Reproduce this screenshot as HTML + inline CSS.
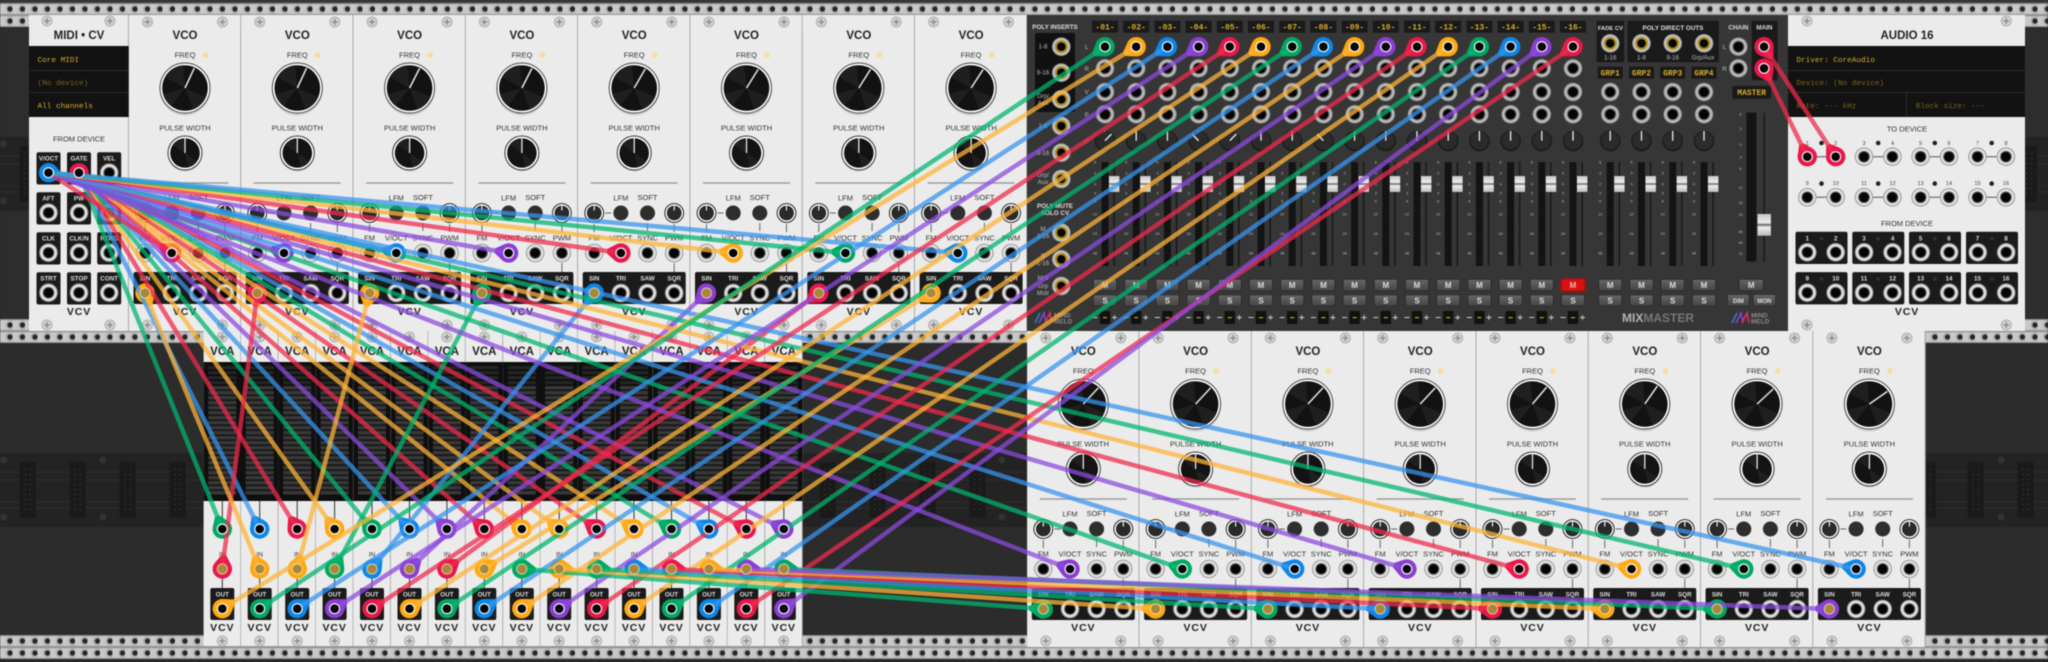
<!DOCTYPE html>
<html><head><meta charset="utf-8"><title>VCV Rack patch</title>
<style>
html,body{margin:0;padding:0;background:#222;width:2048px;height:662px;overflow:hidden}
svg{display:block;filter:blur(.4px)}
text{font-family:"Liberation Sans",sans-serif}
.t{font-weight:bold;font-size:11.5px;text-anchor:middle;fill:#222}
.l{font-size:7.5px;text-anchor:middle;fill:#333}
.w{font-weight:bold;font-size:6.3px;text-anchor:middle;fill:#ddd}
.v{font-weight:bold;font-size:10.5px;text-anchor:middle;fill:#222;letter-spacing:.9px}
.m{font-family:"Liberation Mono",monospace;font-size:7.7px;fill:#d8ac2a}
.d{font-family:"Liberation Mono",monospace;font-size:7.7px;fill:#7c6418}
.a{font-family:"Liberation Mono",monospace;font-size:8px;font-weight:bold;text-anchor:middle;fill:#d8ac2a}
.s{font-size:3.8px;text-anchor:middle;fill:#bbb}
.k{font-size:6.2px;text-anchor:middle;fill:#bbb}
.h{font-weight:bold;font-size:6.3px;text-anchor:middle;fill:#ddd}
.b{font-weight:bold;font-size:8px;text-anchor:middle;fill:#ddd}
.n{font-size:5.6px;text-anchor:middle;fill:#444}
.r{fill:#e8174a}.y{fill:#ffa80f}.g{fill:#00a862}.u{fill:#0d86e8}.p{fill:#8a3ed2}
#cab line{stroke-width:4.5;opacity:.74;fill:none}
.R{stroke:#f02a4b}.Y{stroke:#ffb437}.G{stroke:#00b56e}.B{stroke:#3695ef}.P{stroke:#8b4ade}
</style></head><body>
<svg xmlns="http://www.w3.org/2000/svg" width="2048" height="662" viewBox="0 0 2048 662">
<defs>
<pattern id="rail" width="12.5" height="12" patternUnits="userSpaceOnUse">
<rect width="12.5" height="12" fill="#c8c8c8"/><rect width="12.5" height="1.2" fill="#8e8e8e"/><rect y="10.8" width="12.5" height="1.2" fill="#9c9c9c"/>
<circle cx="10" cy="6" r="4.4" fill="#aaa"/><circle cx="10" cy="6" r="2.6" fill="#262626"/>
</pattern>
<pattern id="st" width="4" height="5" patternUnits="userSpaceOnUse"><rect width="4" height="5" fill="#151515"/><rect width="4" height="3.4" fill="#383838"/></pattern>
<pattern id="fs" width="7" height="2.4" patternUnits="userSpaceOnUse"><rect width="7" height="2.4" fill="#0c0c0c"/><rect y="1.6" width="7" height=".8" fill="#222"/></pattern>
<pattern id="cd" width="5" height="5" patternUnits="userSpaceOnUse"><rect width="5" height="5" fill="#1a1a1a"/><circle cx="2.5" cy="2.5" r=".7" fill="#3a3a3a"/></pattern>
<linearGradient id="hd" x1="0" y1="0" x2="0" y2="1"><stop offset="0" stop-color="#c8c8c8"/><stop offset=".4" stop-color="#eee"/><stop offset=".5" stop-color="#666"/><stop offset=".6" stop-color="#eee"/><stop offset="1" stop-color="#bbb"/></linearGradient>
<linearGradient id="bt" x1="0" y1="0" x2="0" y2="1"><stop offset="0" stop-color="#666"/><stop offset="1" stop-color="#444"/></linearGradient>
<g id="sc"><circle r="5" fill="#d2d2d2" stroke="#b0b0b0"/><path d="M-3 0H3M0-3V3" stroke="#888" stroke-width="1.3"/></g>
<g id="j"><circle r="9.3" fill="#a0a0a0"/><circle r="8.1" fill="#e8e8e8"/><circle r="6.1" fill="#7c7c7c"/><circle r="5" fill="#050505"/></g>
<g id="jm"><circle r="9.3" fill="#8c8c8c"/><circle r="8.2" fill="#bdbdbd"/><circle r="6.2" fill="#707070"/><circle r="5" fill="#050505"/></g>
<g id="jg"><circle r="9.3" fill="#a0a0a0"/><circle r="8.2" fill="#c4c4c4"/><circle r="6.4" fill="#b08c10"/><circle r="4.3" fill="#050505"/></g>
<g id="K"><ellipse cy="2.5" rx="25" ry="25" fill="#cfcfcf"/><circle r="25" fill="#fff" stroke="#444"/><circle r="22.8" fill="#121212"/>
<path d="M0 0L-20-11A23 23 0 0 1 -2-22.8ZM0 0L21 9A23 23 0 0 1 8 21.5ZM0 0L-14 18A23 23 0 0 1 -22 6Z" fill="#1f1f1f"/></g>
<g id="pk"><circle cy="1.5" r="17" fill="#d0d0d0"/><circle r="17" fill="#fff" stroke="#333"/><circle r="14.8" fill="#131313"/><path d="M0 0L-12-8A14.8 14.8 0 0 1 -2-14.6ZM0 0L12 8A14.8 14.8 0 0 1 3 14.5Z" fill="#1f1f1f"/><path d="M0 0V-16.5" stroke="#e8e8e8" stroke-width="1.3"/></g>
<g id="tr"><circle r="9.4" fill="#fff" stroke="#222"/><circle r="7.4" fill="#2a2a2a"/><path d="M0-2.5V-9" stroke="#eee" stroke-width="1.2"/></g>
<g id="vco">
<rect x="-56.2" width="112.4" height="316" fill="#ebebeb"/><rect x="55.3" width="1" height="316" fill="#9a9a9a"/>
<use href="#sc" x="-37.5" y="7"/><use href="#sc" x="37.5" y="7"/><use href="#sc" x="-37.5" y="310"/><use href="#sc" x="37.5" y="310"/>
<text class="t" y="24">VCO</text>
<text class="l" y="42.7">FREQ</text><circle cx="20.5" cy="40" r="2.8" fill="#f7dc9a"/>
<use href="#K" y="73"/>
<text class="l" y="115.7">PULSE WIDTH</text>
<use href="#pk" y="138"/>
<rect x="-43.5" y="167.3" width="87" height="1.4" fill="#999"/>
<text class="l" x="-13.3" y="185.5">LFM</text><text class="l" x="13.3" y="184.8">SOFT</text>
<use href="#tr" x="-40" y="198"/><use href="#tr" x="40" y="198"/>
<circle cx="-13.3" cy="198" r="7.5" fill="#2e2e2e"/><circle cx="13.3" cy="198" r="7.5" fill="#2e2e2e"/>
<path d="M-29 198H-23M-40 209V217M13.3 208V216M40 209V217M40 248V257" stroke="#666" stroke-width="1"/>
<text class="l" x="-40" y="225.6">FM</text><text class="l" x="-13.3" y="225.6">V/OCT</text><text class="l" x="13.3" y="225.6">SYNC</text><text class="l" x="40" y="225.6">PWM</text>
<use href="#j" x="-40" y="238"/><use href="#j" x="-13.3" y="238"/><use href="#j" x="13.3" y="238"/><use href="#j" x="40" y="238"/>
<rect x="-51.5" y="257" width="103" height="32" rx="2" fill="#1b1b1b"/>
<text class="w" x="-40" y="265.3">SIN</text><text class="w" x="-13.3" y="265.3">TRI</text><text class="w" x="13.3" y="265.3">SAW</text><text class="w" x="40" y="265.3">SQR</text>
<use href="#j" x="-40" y="278"/><use href="#j" x="-13.3" y="278"/><use href="#j" x="13.3" y="278"/><use href="#j" x="40" y="278"/>
<text class="v" y="300">VCV</text>
</g>
<g id="vca">
<rect x="-18.7" width="37.4" height="315" fill="#ebebeb"/><rect x="18" width=".9" height="315" fill="#a4a4a4"/>
<rect x="-18.7" y="31" width="37.4" height="139" fill="#0f0f0f"/><rect x="-14" y="35" width="28" height="129" fill="url(#st)"/><rect x="-14" y="35" width="28" height="20" fill="#000" opacity=".35"/>
<use href="#sc" y="6"/><use href="#sc" y="310"/>
<text class="t" y="24">VCA</text>
<path d="M0 170V192M0 247V257" stroke="#333" stroke-width="1"/>
<text class="l" y="225.5" style="font-size:6.5px">IN</text>
<rect x="-12" y="257" width="24" height="32" rx="2" fill="#1b1b1b"/>
<text class="w" y="265.3">OUT</text>
<text class="v" y="300">VCV</text>
</g>
<g id="fad">
<use href="#jm" y="92"/><use href="#jm" y="114.3"/>
<circle cy="141" r="10.3" fill="#1b1b1b"/><circle cy="140.5" r="9" fill="#2b2b2b"/><path d="M0 140.7V131" stroke="#eee" stroke-width="1.3"/>
<rect x="-3.5" y="162" width="7" height="104" fill="url(#fs)"/>
<rect x="8.3" y="162" width="1.6" height="104" fill="#1b1b1b"/>
<rect x="4" y="176" width="10.4" height="16" fill="url(#hd)"/>
<text class="s" x="-10" y="163.5">6</text><text class="s" x="-10" y="174.5">3</text><text class="s" x="-10" y="185.5">0</text><text class="s" x="-10" y="194.5">3</text><text class="s" x="-10" y="202.5">6</text><text class="s" x="-10" y="215.5">12</text><text class="s" x="-10" y="235">24</text><text class="s" x="-10" y="254.5">48</text>
<rect x="-11.5" y="279.3" width="23" height="11.6" rx="1.5" fill="url(#bt)" stroke="#222" stroke-width=".6"/><text class="b" y="288">M</text>
<rect x="-11.5" y="295" width="23" height="11" rx="1.5" fill="url(#bt)" stroke="#222" stroke-width=".6"/><text class="b" y="303.5">S</text>
</g>
<g id="trk"><use href="#jm" y="46.7"/><use href="#jm" y="68.3"/><use href="#fad"/>
<rect x="-5.2" y="311" width="10.4" height="13" rx="1" fill="#111"/><rect x="-2" y="317" width="4" height="1.2" fill="#c9a020"/>
<path d="M-12.5 317.5H-7.5M7 317.5H12M9.5 315V320" stroke="#ccc" stroke-width=".9"/></g>
<g id="bx"><rect x="-12" y="-20.5" width="24" height="32.3" rx="2" fill="#1b1b1b"/><use href="#j"/></g>
<g id="pr"><path d="M0 0H28.4" stroke="#555"/><use href="#j"/><use href="#j" x="28.4"/><circle cx="14.2" cy="-13.7" r="2.3" fill="#222"/></g>
<g id="pb2"><rect x="-26" y="-20.6" width="52" height="32.3" rx="2" fill="#1b1b1b"/><use href="#j" x="-14.2"/><use href="#j" x="14.2"/><circle cy="-13.7" r="1.8" fill="#333"/></g>
<g id="mm"><path d="M0 11L5 1" stroke="#3c78c8" stroke-width="1.6"/><path d="M4 11L9 1L11 11" stroke="#7a4ac8" stroke-width="1.6" fill="none"/><path d="M10 11L15 1L17 11" stroke="#e0305a" stroke-width="1.6" fill="none"/>
<text x="19" y="5.5" style="font-size:6.5px;font-weight:bold;fill:#8a8a8a">MIND</text><text x="19" y="11.5" style="font-size:6.5px;font-weight:bold;fill:#8a8a8a">MELD</text></g>
<g id="cn"><rect x="-8" width="16" height="56" fill="#1a1a1a"/><rect x="-4" y="5" width="8" height="46" fill="url(#cd)"/></g>
<g id="band"><rect width="2048" height="74" fill="#232323"/><path d="M0 19H2048M0 27H2048M0 49H2048M0 55H2048" stroke="#2d2d2d" stroke-width="1.2"/></g>
<path id="b" d="M14-2.2L14 2.2L5.5 8A9.7 9.7 0 1 1 5.5-8Z"/>
<g id="c"><circle r="5.6" fill="#fff" opacity=".85"/><circle r="4.3" fill="#050505"/></g>
<g id="o"><circle r="5.6" fill="#e8d8a8" opacity=".8"/><circle r="4.5" fill="#a8863a"/></g>
</defs>

<rect width="2048" height="662" fill="#2a2a2a"/>
<rect width="2048" height="3" fill="#3a3a3a"/>
<rect y="27" width="2048" height="292" fill="#2d2d2d"/><rect y="343" width="2048" height="292" fill="#2c2c2c"/>
<use href="#band" y="137"/><use href="#band" y="453"/>
<use href="#cn" x="27.7" y="146"/><use href="#cn" x="2029" y="146"/>
<use href="#cn" x="27.7" y="462"/><use href="#cn" x="77.7" y="462"/><use href="#cn" x="127.7" y="462"/><use href="#cn" x="177.7" y="462"/>
<use href="#cn" x="827.7" y="462"/><use href="#cn" x="877.5" y="462"/><use href="#cn" x="927.4" y="462"/><use href="#cn" x="977.3" y="462"/>
<use href="#cn" x="1928" y="462"/><use href="#cn" x="1975.7" y="462"/><use href="#cn" x="2025.5" y="462"/>
<circle cx="3.5" cy="144" r="3.5" fill="#333"/><circle cx="3.5" cy="201" r="3.5" fill="#333"/><circle cx="3.5" cy="460" r="3.5" fill="#333"/><circle cx="3.5" cy="517" r="3.5" fill="#333"/><circle cx="103" cy="460" r="3.5" fill="#333"/><circle cx="103" cy="517" r="3.5" fill="#333"/><circle cx="1002" cy="460" r="3.5" fill="#333"/><circle cx="1002" cy="517" r="3.5" fill="#333"/><circle cx="2001" cy="460" r="3.5" fill="#333"/><circle cx="2001" cy="517" r="3.5" fill="#333"/>
<rect transform="translate(0,3)" width="2048" height="12" fill="url(#rail)"/>
<rect transform="translate(0,15)" width="2048" height="12" fill="url(#rail)"/>
<rect transform="translate(0,319)" width="2048" height="12" fill="url(#rail)"/>
<rect transform="translate(0,331)" width="2048" height="12" fill="url(#rail)"/>
<rect transform="translate(0,635)" width="2048" height="12" fill="url(#rail)"/>
<rect transform="translate(0,647)" width="2048" height="12" fill="url(#rail)"/>

<!-- MIDI CV -->
<rect x="29" y="15" width="100" height="316" fill="#ebebeb"/><rect x="128" y="15" width="1" height="316" fill="#9a9a9a"/>
<use href="#sc" x="47" y="21"/><use href="#sc" x="110" y="21"/><use href="#sc" x="47" y="325"/><use href="#sc" x="110" y="325"/>
<text class="t" x="79" y="39">MIDI • CV</text>
<rect x="29" y="46" width="100" height="71" fill="#121212"/><path d="M29 70.5H129M29 92.5H129" stroke="#2b2b2b"/>
<text class="m" x="37.5" y="62">Core MIDI</text><text class="d" x="37.5" y="85">(No device)</text><text class="m" x="37.5" y="108">All channels</text>
<text class="l" x="79" y="141.7">FROM DEVICE</text>
<g>
<use href="#bx" x="48.5" y="172.7"/><use href="#bx" x="79" y="172.7"/><use href="#bx" x="109.2" y="172.7"/>
<use href="#bx" x="48.5" y="212.7"/><use href="#bx" x="79" y="212.7"/><use href="#bx" x="109.2" y="212.7"/>
<use href="#bx" x="48.5" y="252.7"/><use href="#bx" x="79" y="252.7"/><use href="#bx" x="109.2" y="252.7"/>
<use href="#bx" x="48.5" y="292.7"/><use href="#bx" x="79" y="292.7"/><use href="#bx" x="109.2" y="292.7"/>
</g>
<text class="h" x="48.5" y="160.3">V/OCT</text><text class="h" x="79" y="160.3">GATE</text><text class="h" x="109.2" y="160.3">VEL</text>
<text class="h" x="48.5" y="200.3">AFT</text><text class="h" x="79" y="200.3">PW</text><text class="h" x="109.2" y="200.3">MW</text>
<text class="h" x="48.5" y="240.3">CLK</text><text class="h" x="79" y="240.3">CLK/N</text><text class="h" x="109.2" y="240.3">RTRG</text>
<text class="h" x="48.5" y="280.3">STRT</text><text class="h" x="79" y="280.3">STOP</text><text class="h" x="109.2" y="280.3">CONT</text>
<text class="v" x="79" y="315">VCV</text>

<!-- VCO rows -->
<use href="#vco" x="185" y="15"/><use href="#vco" x="297.3" y="15"/><use href="#vco" x="409.6" y="15"/><use href="#vco" x="521.9" y="15"/><use href="#vco" x="634.2" y="15"/><use href="#vco" x="746.5" y="15"/><use href="#vco" x="858.8" y="15"/><use href="#vco" x="971.1" y="15"/>
<use href="#vco" x="1083.3" y="331"/><use href="#vco" x="1195.6" y="331"/><use href="#vco" x="1307.9" y="331"/><use href="#vco" x="1420.2" y="331"/><use href="#vco" x="1532.5" y="331"/><use href="#vco" x="1644.8" y="331"/><use href="#vco" x="1757.1" y="331"/><use href="#vco" x="1869.4" y="331"/>
<g stroke="#e8e8e8" stroke-width="1.5">
<path d="M0 0V-22" transform="translate(185 88) rotate(25)"/><path d="M0 0V-22" transform="translate(297.3 88) rotate(25)"/><path d="M0 0V-22" transform="translate(409.6 88) rotate(27)"/><path d="M0 0V-22" transform="translate(521.9 88) rotate(27)"/><path d="M0 0V-22" transform="translate(634.2 88) rotate(30)"/><path d="M0 0V-22" transform="translate(746.5 88) rotate(32)"/><path d="M0 0V-22" transform="translate(858.8 88) rotate(32)"/><path d="M0 0V-22" transform="translate(971.1 88) rotate(33)"/>
<path d="M0 0V-22" transform="translate(1083.3 404) rotate(43)"/><path d="M0 0V-22" transform="translate(1195.6 404) rotate(43)"/><path d="M0 0V-22" transform="translate(1307.9 404) rotate(43)"/><path d="M0 0V-22" transform="translate(1420.2 404) rotate(43)"/><path d="M0 0V-22" transform="translate(1532.5 404) rotate(40)"/><path d="M0 0V-22" transform="translate(1644.8 404) rotate(35)"/><path d="M0 0V-22" transform="translate(1757.1 404) rotate(47)"/><path d="M0 0V-22" transform="translate(1869.4 404) rotate(55)"/>
</g>

<!-- VCA row -->
<use href="#vca" x="222.3" y="331"/><use href="#vca" x="259.7" y="331"/><use href="#vca" x="297.2" y="331"/><use href="#vca" x="334.6" y="331"/><use href="#vca" x="372" y="331"/><use href="#vca" x="409.5" y="331"/><use href="#vca" x="446.9" y="331"/><use href="#vca" x="484.3" y="331"/><use href="#vca" x="521.8" y="331"/><use href="#vca" x="559.2" y="331"/><use href="#vca" x="596.6" y="331"/><use href="#vca" x="634" y="331"/><use href="#vca" x="671.5" y="331"/><use href="#vca" x="708.9" y="331"/><use href="#vca" x="746.3" y="331"/><use href="#vca" x="783.8" y="331"/>

<!-- MixMaster -->
<rect x="1027" y="15" width="761" height="316" fill="#363636"/>
<text class="h" x="1055" y="29">POLY INSERTS</text>
<rect x="1035" y="33" width="40" height="79" rx="2" fill="#111"/>
<use href="#jg" x="1061.3" y="46.7"/><use href="#jg" x="1061.3" y="72.7"/><use href="#jg" x="1061.3" y="99.3"/><use href="#jg" x="1061.3" y="126"/><use href="#jg" x="1061.3" y="152.7"/><use href="#jg" x="1061.3" y="179"/><use href="#jg" x="1061.3" y="232.7"/><use href="#jg" x="1061.3" y="259.3"/><use href="#jg" x="1061.3" y="286"/>
<text class="k" x="1043" y="48.5">1-8</text><text class="k" x="1043" y="74.5">9-16</text><text class="k" x="1043" y="98">Grp/</text><text class="k" x="1043" y="105">Aux</text><text class="k" x="1043" y="128">1-8</text><text class="k" x="1043" y="155">9-16</text><text class="k" x="1043" y="177">Grp/</text><text class="k" x="1043" y="184">Aux</text>
<text class="h" x="1055" y="208">POLY MUTE</text><text class="h" x="1055" y="215">SOLO CV</text>
<text class="k" x="1043" y="231">M</text><text class="k" x="1043" y="238">1-16</text><text class="k" x="1043" y="258">S</text><text class="k" x="1043" y="265">1-16</text><text class="k" x="1043" y="280">M/S</text><text class="k" x="1043" y="288">Grp</text><text class="k" x="1043" y="295">Mstr</text>
<text class="k" x="1086.7" y="49">L</text><text class="k" x="1086.7" y="71">R</text><text class="k" x="1086.7" y="94">V</text><text class="k" x="1086.7" y="117">P</text><text class="k" x="1086.7" y="144">P</text>
<use href="#mm" x="1035" y="312"/>

<g><use href="#trk" x="1105"/><use href="#trk" x="1136.2"/><use href="#trk" x="1167.4"/><use href="#trk" x="1198.6"/><use href="#trk" x="1229.8"/><use href="#trk" x="1261"/><use href="#trk" x="1292.2"/><use href="#trk" x="1323.4"/><use href="#trk" x="1354.6"/><use href="#trk" x="1385.8"/><use href="#trk" x="1417"/><use href="#trk" x="1448.2"/><use href="#trk" x="1479.4"/><use href="#trk" x="1510.6"/><use href="#trk" x="1541.8"/><use href="#trk" x="1573"/></g>
<g fill="#1a1a1a">
<rect x="1092" y="20.7" width="26" height="12"/><rect x="1123.2" y="20.7" width="26" height="12"/><rect x="1154.4" y="20.7" width="26" height="12"/><rect x="1185.6" y="20.7" width="26" height="12"/><rect x="1216.8" y="20.7" width="26" height="12"/><rect x="1248" y="20.7" width="26" height="12"/><rect x="1279.2" y="20.7" width="26" height="12"/><rect x="1310.4" y="20.7" width="26" height="12"/><rect x="1341.6" y="20.7" width="26" height="12"/><rect x="1372.8" y="20.7" width="26" height="12"/><rect x="1404" y="20.7" width="26" height="12"/><rect x="1435.2" y="20.7" width="26" height="12"/><rect x="1466.4" y="20.7" width="26" height="12"/><rect x="1497.6" y="20.7" width="26" height="12"/><rect x="1528.8" y="20.7" width="26" height="12"/><rect x="1560" y="20.7" width="26" height="12"/>
</g>
<text class="a" x="1105" y="29.6">-01-</text><text class="a" x="1136.2" y="29.6">-02-</text><text class="a" x="1167.4" y="29.6">-03-</text><text class="a" x="1198.6" y="29.6">-04-</text><text class="a" x="1229.8" y="29.6">-05-</text><text class="a" x="1261" y="29.6">-06-</text><text class="a" x="1292.2" y="29.6">-07-</text><text class="a" x="1323.4" y="29.6">-08-</text><text class="a" x="1354.6" y="29.6">-09-</text><text class="a" x="1385.8" y="29.6">-10-</text><text class="a" x="1417" y="29.6">-11-</text><text class="a" x="1448.2" y="29.6">-12-</text><text class="a" x="1479.4" y="29.6">-13-</text><text class="a" x="1510.6" y="29.6">-14-</text><text class="a" x="1541.8" y="29.6">-15-</text><text class="a" x="1573" y="29.6">-16-</text>
<!-- pan overrides -->
<g><circle cx="1105" cy="140.5" r="9" fill="#2b2b2b"/><path d="M1105 140.7L1111.5 134" stroke="#eee" stroke-width="1.4"/><circle cx="1198.6" cy="140.5" r="9" fill="#2b2b2b"/><path d="M1198.6 140.7L1192 134" stroke="#eee" stroke-width="1.4"/><circle cx="1229.8" cy="140.5" r="9" fill="#2b2b2b"/><path d="M1229.8 140.7L1236.3 134" stroke="#eee" stroke-width="1.4"/><circle cx="1323.4" cy="140.5" r="9" fill="#2b2b2b"/><path d="M1323.4 140.7L1317 134" stroke="#eee" stroke-width="1.4"/></g>
<!-- red mute -->
<rect x="1559" y="277" width="28" height="16" rx="3" fill="#a01010" opacity=".5"/><rect x="1561.5" y="279.3" width="23" height="11.6" rx="1.5" fill="#d81010"/><text class="b" x="1573" y="288" style="fill:#ffb0b0">M</text>

<!-- groups -->
<rect x="1596.6" y="20.7" width="27.6" height="41.6" rx="1" fill="#1a1a1a"/><rect x="1627.5" y="20.7" width="91.3" height="41.6" rx="1" fill="#1a1a1a"/>
<text class="h" x="1610.4" y="30" style="font-size:5.8px">FADE CV</text><text class="h" x="1673" y="30">POLY DIRECT OUTS</text>
<use href="#jg" x="1610.2" y="43.3"/><use href="#jg" x="1641.5" y="43.3"/><use href="#jg" x="1672.7" y="43.3"/><use href="#jg" x="1704" y="43.3"/>
<text class="k" x="1610.2" y="59.5">1-16</text><text class="k" x="1641.5" y="59.5">1-8</text><text class="k" x="1672.7" y="59.5">9-16</text><text class="k" x="1703" y="59.5">Grp/Aux</text>
<g fill="#1a1a1a"><rect x="1597.7" y="66.7" width="25" height="12"/><rect x="1629" y="66.7" width="25" height="12"/><rect x="1660.2" y="66.7" width="25" height="12"/><rect x="1691.5" y="66.7" width="25" height="12"/></g>
<text class="a" x="1610.2" y="75.6">GRP1</text><text class="a" x="1641.5" y="75.6">GRP2</text><text class="a" x="1672.7" y="75.6">GRP3</text><text class="a" x="1704" y="75.6">GRP4</text>
<use href="#fad" x="1610.2"/><use href="#fad" x="1641.5"/><use href="#fad" x="1672.7"/><use href="#fad" x="1704"/>

<!-- master -->
<rect x="1751.6" y="20.7" width="26" height="59.5" rx="1" fill="#1a1a1a"/>
<text class="h" x="1738.4" y="29.5">CHAIN</text><text class="h" x="1764.4" y="29.5">MAIN</text>
<use href="#jm" x="1738.4" y="46.7"/><use href="#jm" x="1738.4" y="68.3"/>
<text class="k" x="1724.5" y="49">L</text><text class="k" x="1724.5" y="71">R</text>
<rect x="1732.4" y="85.7" width="38.6" height="13" rx="1" fill="#1a1a1a"/><text class="a" x="1751.7" y="95">MASTER</text>
<rect x="1746.4" y="112.7" width="10" height="149" fill="url(#fs)"/><rect x="1763.4" y="112.7" width="1.6" height="149" fill="#1b1b1b"/>
<rect x="1757.5" y="214" width="13.4" height="21.7" fill="url(#hd)"/>
<g><text class="s" x="1740.5" y="115.5">6</text><text class="s" x="1740.5" y="130">3</text><text class="s" x="1740.5" y="146">0</text><text class="s" x="1740.5" y="158.5">3</text><text class="s" x="1740.5" y="170">6</text><text class="s" x="1740.5" y="189">12</text><text class="s" x="1740.5" y="204">18</text><text class="s" x="1740.5" y="216">24</text><text class="s" x="1740.5" y="233">36</text><text class="s" x="1740.5" y="244">48</text><text class="s" x="1740.5" y="255">72</text></g>
<rect x="1739.2" y="279.3" width="24" height="11.6" rx="1.5" fill="url(#bt)" stroke="#222" stroke-width=".6"/><text class="b" x="1751.2" y="288">M</text>
<rect x="1727.6" y="294.5" width="21.6" height="11.5" rx="1.5" fill="url(#bt)" stroke="#222" stroke-width=".6"/><text class="b" x="1738.4" y="303" style="font-size:6px">DIM</text>
<rect x="1753.2" y="294.5" width="22.4" height="11.5" rx="1.5" fill="url(#bt)" stroke="#222" stroke-width=".6"/><text class="b" x="1764.4" y="303" style="font-size:6px">MON</text>
<text x="1622" y="322" style="font-size:12px;font-weight:bold"><tspan fill="#b4b4b4">MIX</tspan><tspan fill="#777">MASTER</tspan></text>
<use href="#mm" x="1732" y="312"/>

<!-- Audio 16 -->
<rect x="1788" y="15" width="237" height="316" fill="#ebebeb"/>
<use href="#sc" x="1807" y="21"/><use href="#sc" x="2006.3" y="21"/><use href="#sc" x="1807" y="325"/><use href="#sc" x="2006.3" y="325"/>
<text class="t" x="1907" y="39">AUDIO 16</text>
<rect x="1788" y="46" width="237" height="71" fill="#121212"/><path d="M1788 70.5H2025M1788 92.5H2025M1906.5 93V117" stroke="#2b2b2b"/>
<text class="m" x="1796.4" y="62">Driver: CoreAudio</text><text class="d" x="1796.4" y="85">Device: (No device)</text><text class="d" x="1796.4" y="108">Rate: --- kHz</text><text class="d" x="1915.8" y="108">Block size: ---</text>
<text class="l" x="1907" y="131.3">TO DEVICE</text>
<use href="#pr" x="1807.3" y="156.7"/><use href="#pr" x="1864" y="156.7"/><use href="#pr" x="1920.6" y="156.7"/><use href="#pr" x="1977.5" y="156.7"/>
<use href="#pr" x="1807.3" y="197.3"/><use href="#pr" x="1864" y="197.3"/><use href="#pr" x="1920.6" y="197.3"/><use href="#pr" x="1977.5" y="197.3"/>
<text class="n" x="1807.3" y="145">1</text><text class="n" x="1835.7" y="145">2</text><text class="n" x="1864" y="145">3</text><text class="n" x="1892.6" y="145">4</text><text class="n" x="1920.6" y="145">5</text><text class="n" x="1949" y="145">6</text><text class="n" x="1977.5" y="145">7</text><text class="n" x="2006" y="145">8</text>
<text class="n" x="1807.3" y="185">9</text><text class="n" x="1835.7" y="185">10</text><text class="n" x="1864" y="185">11</text><text class="n" x="1892.6" y="185">12</text><text class="n" x="1920.6" y="185">13</text><text class="n" x="1949" y="185">14</text><text class="n" x="1977.5" y="185">15</text><text class="n" x="2006" y="185">16</text>
<text class="l" x="1907" y="226">FROM DEVICE</text>
<use href="#pb2" x="1821.5" y="252.3"/><use href="#pb2" x="1878.3" y="252.3"/><use href="#pb2" x="1935" y="252.3"/><use href="#pb2" x="1992" y="252.3"/>
<use href="#pb2" x="1821.5" y="292.7"/><use href="#pb2" x="1878.3" y="292.7"/><use href="#pb2" x="1935" y="292.7"/><use href="#pb2" x="1992" y="292.7"/>
<g style="fill:#ddd"><text class="h" x="1807.3" y="240.3">1</text><text class="h" x="1835.7" y="240.3">2</text><text class="h" x="1864" y="240.3">3</text><text class="h" x="1892.6" y="240.3">4</text><text class="h" x="1920.6" y="240.3">5</text><text class="h" x="1949" y="240.3">6</text><text class="h" x="1977.5" y="240.3">7</text><text class="h" x="2006" y="240.3">8</text>
<text class="h" x="1807.3" y="280.3">9</text><text class="h" x="1835.7" y="280.3">10</text><text class="h" x="1864" y="280.3">11</text><text class="h" x="1892.6" y="280.3">12</text><text class="h" x="1920.6" y="280.3">13</text><text class="h" x="1949" y="280.3">14</text><text class="h" x="1977.5" y="280.3">15</text><text class="h" x="2006" y="280.3">16</text></g>
<text class="v" x="1907" y="315">VCV</text>

<!-- plug bodies -->
<g>
<use href="#b" class="u" transform="translate(48.5 172.7) rotate(15)"/><use href="#b" class="r" transform="translate(79 172.7) rotate(60)"/>
<use href="#b" class="r" transform="translate(171.7 253) rotate(-147)"/><use href="#b" class="p" transform="translate(284 253) rotate(-161)"/><use href="#b" class="u" transform="translate(396.3 253) rotate(-167)"/><use href="#b" class="p" transform="translate(508.6 253) rotate(-170)"/><use href="#b" class="r" transform="translate(620.9 253) rotate(-172)"/><use href="#b" class="y" transform="translate(733.2 253) rotate(-173)"/><use href="#b" class="g" transform="translate(845.5 253) rotate(-174)"/><use href="#b" class="u" transform="translate(957.8 253) rotate(-175)"/>
<use href="#b" class="p" transform="translate(1070 569) rotate(-159)"/><use href="#b" class="g" transform="translate(1182.3 569) rotate(-161)"/><use href="#b" class="u" transform="translate(1294.7 569) rotate(-162)"/><use href="#b" class="p" transform="translate(1406.9 569) rotate(-164)"/><use href="#b" class="r" transform="translate(1519.2 569) rotate(-165)"/><use href="#b" class="y" transform="translate(1631.5 569) rotate(-166)"/><use href="#b" class="g" transform="translate(1743.8 569) rotate(-167)"/><use href="#b" class="u" transform="translate(1856.1 569) rotate(-168)"/>
<use href="#b" class="g" transform="translate(222.3 529) rotate(-112)"/><use href="#b" class="u" transform="translate(259.7 529) rotate(-117)"/><use href="#b" class="r" transform="translate(297.2 529) rotate(-121)"/><use href="#b" class="y" transform="translate(334.6 529) rotate(-126)"/><use href="#b" class="g" transform="translate(372 529) rotate(-129)"/><use href="#b" class="u" transform="translate(409.5 529) rotate(-133)"/><use href="#b" class="p" transform="translate(446.9 529) rotate(-136)"/><use href="#b" class="r" transform="translate(484.3 529) rotate(-139)"/><use href="#b" class="y" transform="translate(521.8 529) rotate(-141)"/><use href="#b" class="y" transform="translate(559.2 529) rotate(-143)"/><use href="#b" class="r" transform="translate(596.6 529) rotate(-145)"/><use href="#b" class="y" transform="translate(634 529) rotate(-147)"/><use href="#b" class="g" transform="translate(671.5 529) rotate(-149)"/><use href="#b" class="u" transform="translate(708.9 529) rotate(-150)"/><use href="#b" class="r" transform="translate(746.3 529) rotate(-152)"/><use href="#b" class="p" transform="translate(783.8 529) rotate(-153)"/>
<use href="#b" class="r" transform="translate(222.3 569) rotate(-83)"/><use href="#b" class="y" transform="translate(259.7 569) rotate(-113)"/><use href="#b" class="y" transform="translate(297.2 569) rotate(-75)"/><use href="#b" class="g" transform="translate(334.6 569) rotate(-62)"/><use href="#b" class="u" transform="translate(372 569) rotate(-51)"/><use href="#b" class="p" transform="translate(409.5 569) rotate(-43)"/><use href="#b" class="r" transform="translate(446.9 569) rotate(-37)"/><use href="#b" class="y" transform="translate(484.3 569) rotate(-32)"/><use href="#b" class="g" transform="translate(521.8 569) rotate(4)"/><use href="#b" class="y" transform="translate(559.2 569) rotate(4)"/><use href="#b" class="g" transform="translate(596.6 569) rotate(3)"/><use href="#b" class="u" transform="translate(634 569) rotate(3)"/><use href="#b" class="r" transform="translate(671.5 569) rotate(3)"/><use href="#b" class="y" transform="translate(708.9 569) rotate(3)"/><use href="#b" class="p" transform="translate(746.3 569) rotate(2)"/><use href="#b" class="g" transform="translate(783.8 569) rotate(2)"/>
<use href="#b" class="y" transform="translate(222.3 608.7) rotate(-32)"/><use href="#b" class="g" transform="translate(259.7 608.7) rotate(-34)"/><use href="#b" class="u" transform="translate(297.2 608.7) rotate(-33)"/><use href="#b" class="p" transform="translate(334.6 608.7) rotate(-33)"/><use href="#b" class="r" transform="translate(372 608.7) rotate(-33)"/><use href="#b" class="y" transform="translate(409.5 608.7) rotate(-33)"/><use href="#b" class="g" transform="translate(446.9 608.7) rotate(-34)"/><use href="#b" class="u" transform="translate(484.3 608.7) rotate(-34)"/><use href="#b" class="y" transform="translate(521.8 608.7) rotate(-34)"/><use href="#b" class="p" transform="translate(559.2 608.7) rotate(-34)"/><use href="#b" class="r" transform="translate(596.6 608.7) rotate(-34)"/><use href="#b" class="y" transform="translate(634 608.7) rotate(-35)"/><use href="#b" class="g" transform="translate(671.5 608.7) rotate(-35)"/><use href="#b" class="u" transform="translate(708.9 608.7) rotate(-35)"/><use href="#b" class="r" transform="translate(746.3 608.7) rotate(-34)"/><use href="#b" class="p" transform="translate(783.8 608.7) rotate(-37)"/>
<use href="#b" class="y" transform="translate(145 293) rotate(67)"/><use href="#b" class="r" transform="translate(257.3 293) rotate(97)"/><use href="#b" class="y" transform="translate(369.6 293) rotate(105)"/><use href="#b" class="g" transform="translate(481.9 293) rotate(118)"/><use href="#b" class="u" transform="translate(594.2 293) rotate(129)"/><use href="#b" class="p" transform="translate(706.5 293) rotate(137)"/><use href="#b" class="r" transform="translate(818.8 293) rotate(143)"/><use href="#b" class="y" transform="translate(931.1 293) rotate(148)"/>
<use href="#b" class="g" transform="translate(1043.3 609) rotate(184)"/><use href="#b" class="y" transform="translate(1155.6 609) rotate(184)"/><use href="#b" class="g" transform="translate(1267.9 609) rotate(183)"/><use href="#b" class="u" transform="translate(1380.2 609) rotate(183)"/><use href="#b" class="r" transform="translate(1492.5 609) rotate(183)"/><use href="#b" class="y" transform="translate(1604.8 609) rotate(183)"/><use href="#b" class="g" transform="translate(1717.1 609) rotate(182)"/><use href="#b" class="p" transform="translate(1829.4 609) rotate(182)"/>
<use href="#b" class="g" transform="translate(1105 46.7) rotate(146)"/><use href="#b" class="y" transform="translate(1136.2 46.7) rotate(148)"/><use href="#b" class="u" transform="translate(1167.4 46.7) rotate(147)"/><use href="#b" class="p" transform="translate(1198.6 46.7) rotate(147)"/><use href="#b" class="r" transform="translate(1229.8 46.7) rotate(147)"/><use href="#b" class="y" transform="translate(1261 46.7) rotate(147)"/><use href="#b" class="g" transform="translate(1292.2 46.7) rotate(146)"/><use href="#b" class="u" transform="translate(1323.4 46.7) rotate(146)"/><use href="#b" class="y" transform="translate(1354.6 46.7) rotate(146)"/><use href="#b" class="p" transform="translate(1385.8 46.7) rotate(146)"/><use href="#b" class="r" transform="translate(1417 46.7) rotate(146)"/><use href="#b" class="y" transform="translate(1448.2 46.7) rotate(145)"/><use href="#b" class="g" transform="translate(1479.4 46.7) rotate(145)"/><use href="#b" class="u" transform="translate(1510.6 46.7) rotate(145)"/><use href="#b" class="p" transform="translate(1541.8 46.7) rotate(143)"/><use href="#b" class="r" transform="translate(1573 46.7) rotate(146)"/>
<use href="#b" class="r" transform="translate(1764 46.7) rotate(57)"/><use href="#b" class="r" transform="translate(1764 68.3) rotate(64)"/><use href="#b" class="r" transform="translate(1835.7 156.7) rotate(-123)"/><use href="#b" class="r" transform="translate(1807.3 156.7) rotate(-116)"/>
</g>

<!-- cables -->
<g id="cab">
<line class="G" x1="79" y1="172.7" x2="222.3" y2="529"/><line class="B" x1="79" y1="172.7" x2="259.7" y2="529"/><line class="R" x1="79" y1="172.7" x2="297.2" y2="529"/><line class="Y" x1="79" y1="172.7" x2="334.6" y2="529"/><line class="G" x1="79" y1="172.7" x2="372" y2="529"/><line class="B" x1="79" y1="172.7" x2="409.5" y2="529"/><line class="P" x1="79" y1="172.7" x2="446.9" y2="529"/><line class="R" x1="79" y1="172.7" x2="484.3" y2="529"/><line class="Y" x1="79" y1="172.7" x2="521.8" y2="529"/><line class="Y" x1="79" y1="172.7" x2="559.2" y2="529"/><line class="R" x1="79" y1="172.7" x2="596.6" y2="529"/><line class="Y" x1="79" y1="172.7" x2="634" y2="529"/><line class="G" x1="79" y1="172.7" x2="671.5" y2="529"/><line class="B" x1="79" y1="172.7" x2="708.9" y2="529"/><line class="R" x1="79" y1="172.7" x2="746.3" y2="529"/><line class="P" x1="79" y1="172.7" x2="783.8" y2="529"/>
<line class="R" x1="222.3" y1="569" x2="257.3" y2="293"/><line class="Y" x1="259.7" y1="569" x2="145" y2="293"/><line class="Y" x1="297.2" y1="569" x2="369.6" y2="293"/><line class="G" x1="334.6" y1="569" x2="481.9" y2="293"/><line class="B" x1="372" y1="569" x2="594.2" y2="293"/><line class="P" x1="409.5" y1="569" x2="706.5" y2="293"/><line class="R" x1="446.9" y1="569" x2="818.8" y2="293"/><line class="Y" x1="484.3" y1="569" x2="931.1" y2="293"/>
<line class="B" x1="48.5" y1="172.7" x2="1856.1" y2="569"/><line class="G" x1="48.5" y1="172.7" x2="1743.8" y2="569"/><line class="Y" x1="48.5" y1="172.7" x2="1631.5" y2="569"/><line class="R" x1="48.5" y1="172.7" x2="1519.2" y2="569"/><line class="P" x1="48.5" y1="172.7" x2="1406.9" y2="569"/><line class="B" x1="48.5" y1="172.7" x2="1294.7" y2="569"/><line class="G" x1="48.5" y1="172.7" x2="1182.3" y2="569"/><line class="P" x1="48.5" y1="172.7" x2="1070" y2="569"/>
<line class="R" x1="48.5" y1="172.7" x2="171.7" y2="253"/><line class="P" x1="48.5" y1="172.7" x2="284" y2="253"/><line class="B" x1="48.5" y1="172.7" x2="396.3" y2="253"/><line class="P" x1="48.5" y1="172.7" x2="508.6" y2="253"/><line class="R" x1="48.5" y1="172.7" x2="620.9" y2="253"/><line class="Y" x1="48.5" y1="172.7" x2="733.2" y2="253"/><line class="G" x1="48.5" y1="172.7" x2="845.5" y2="253"/><line class="B" x1="48.5" y1="172.7" x2="957.8" y2="253"/>
<line class="Y" x1="222.3" y1="608.7" x2="1136.2" y2="46.7"/><line class="G" x1="259.7" y1="608.7" x2="1105" y2="46.7"/><line class="B" x1="297.2" y1="608.7" x2="1167.4" y2="46.7"/><line class="P" x1="334.6" y1="608.7" x2="1198.6" y2="46.7"/><line class="R" x1="372" y1="608.7" x2="1229.8" y2="46.7"/><line class="Y" x1="409.5" y1="608.7" x2="1261" y2="46.7"/><line class="G" x1="446.9" y1="608.7" x2="1292.2" y2="46.7"/><line class="B" x1="484.3" y1="608.7" x2="1323.4" y2="46.7"/><line class="Y" x1="521.8" y1="608.7" x2="1354.6" y2="46.7"/><line class="P" x1="559.2" y1="608.7" x2="1385.8" y2="46.7"/><line class="R" x1="596.6" y1="608.7" x2="1417" y2="46.7"/><line class="Y" x1="634" y1="608.7" x2="1448.2" y2="46.7"/><line class="G" x1="671.5" y1="608.7" x2="1479.4" y2="46.7"/><line class="B" x1="708.9" y1="608.7" x2="1510.6" y2="46.7"/><line class="R" x1="746.3" y1="608.7" x2="1573" y2="46.7"/><line class="P" x1="783.8" y1="608.7" x2="1541.8" y2="46.7"/>
<line class="G" x1="521.8" y1="569" x2="1043.3" y2="609"/><line class="Y" x1="559.2" y1="569" x2="1155.6" y2="609"/><line class="G" x1="596.6" y1="569" x2="1267.9" y2="609"/><line class="B" x1="634" y1="569" x2="1380.2" y2="609"/><line class="R" x1="671.5" y1="569" x2="1492.5" y2="609"/><line class="Y" x1="708.9" y1="569" x2="1604.8" y2="609"/><line class="G" x1="783.8" y1="569" x2="1717.1" y2="609"/><line class="P" x1="746.3" y1="569" x2="1829.4" y2="609"/>
<line class="R" x1="1764" y1="46.7" x2="1835.7" y2="156.7"/><line class="R" x1="1764" y1="68.3" x2="1807.3" y2="156.7"/>
</g>

<!-- plug centres -->
<g>
<use href="#c" x="48.5" y="172.7"/><use href="#c" x="79" y="172.7"/>
<use href="#c" x="171.7" y="253"/><use href="#c" x="284" y="253"/><use href="#c" x="396.3" y="253"/><use href="#c" x="508.6" y="253"/><use href="#c" x="620.9" y="253"/><use href="#c" x="733.2" y="253"/><use href="#c" x="845.5" y="253"/><use href="#c" x="957.8" y="253"/>
<use href="#c" x="1070" y="569"/><use href="#c" x="1182.3" y="569"/><use href="#c" x="1294.7" y="569"/><use href="#c" x="1406.9" y="569"/><use href="#c" x="1519.2" y="569"/><use href="#c" x="1631.5" y="569"/><use href="#c" x="1743.8" y="569"/><use href="#c" x="1856.1" y="569"/>
<use href="#c" x="222.3" y="529"/><use href="#c" x="259.7" y="529"/><use href="#c" x="297.2" y="529"/><use href="#c" x="334.6" y="529"/><use href="#c" x="372" y="529"/><use href="#c" x="409.5" y="529"/><use href="#c" x="446.9" y="529"/><use href="#c" x="484.3" y="529"/><use href="#c" x="521.8" y="529"/><use href="#c" x="559.2" y="529"/><use href="#c" x="596.6" y="529"/><use href="#c" x="634" y="529"/><use href="#c" x="671.5" y="529"/><use href="#c" x="708.9" y="529"/><use href="#c" x="746.3" y="529"/><use href="#c" x="783.8" y="529"/>
<use href="#o" x="222.3" y="569"/><use href="#o" x="259.7" y="569"/><use href="#o" x="297.2" y="569"/><use href="#o" x="334.6" y="569"/><use href="#o" x="372" y="569"/><use href="#o" x="409.5" y="569"/><use href="#o" x="446.9" y="569"/><use href="#o" x="484.3" y="569"/><use href="#o" x="521.8" y="569"/><use href="#o" x="559.2" y="569"/><use href="#o" x="596.6" y="569"/><use href="#o" x="634" y="569"/><use href="#o" x="671.5" y="569"/><use href="#o" x="708.9" y="569"/><use href="#o" x="746.3" y="569"/><use href="#o" x="783.8" y="569"/>
<use href="#c" x="222.3" y="608.7"/><use href="#c" x="259.7" y="608.7"/><use href="#c" x="297.2" y="608.7"/><use href="#c" x="334.6" y="608.7"/><use href="#c" x="372" y="608.7"/><use href="#c" x="409.5" y="608.7"/><use href="#c" x="446.9" y="608.7"/><use href="#c" x="484.3" y="608.7"/><use href="#c" x="521.8" y="608.7"/><use href="#c" x="559.2" y="608.7"/><use href="#c" x="596.6" y="608.7"/><use href="#c" x="634" y="608.7"/><use href="#c" x="671.5" y="608.7"/><use href="#c" x="708.9" y="608.7"/><use href="#c" x="746.3" y="608.7"/><use href="#c" x="783.8" y="608.7"/>
<use href="#o" x="145" y="293"/><use href="#o" x="257.3" y="293"/><use href="#o" x="369.6" y="293"/><use href="#o" x="481.9" y="293"/><use href="#o" x="594.2" y="293"/><use href="#o" x="706.5" y="293"/><use href="#o" x="818.8" y="293"/><use href="#o" x="931.1" y="293"/>
<use href="#o" x="1043.3" y="609"/><use href="#o" x="1155.6" y="609"/><use href="#o" x="1267.9" y="609"/><use href="#o" x="1380.2" y="609"/><use href="#o" x="1492.5" y="609"/><use href="#o" x="1604.8" y="609"/><use href="#o" x="1717.1" y="609"/><use href="#o" x="1829.4" y="609"/>
<use href="#c" x="1105" y="46.7"/><use href="#c" x="1136.2" y="46.7"/><use href="#c" x="1167.4" y="46.7"/><use href="#c" x="1198.6" y="46.7"/><use href="#c" x="1229.8" y="46.7"/><use href="#c" x="1261" y="46.7"/><use href="#c" x="1292.2" y="46.7"/><use href="#c" x="1323.4" y="46.7"/><use href="#c" x="1354.6" y="46.7"/><use href="#c" x="1385.8" y="46.7"/><use href="#c" x="1417" y="46.7"/><use href="#c" x="1448.2" y="46.7"/><use href="#c" x="1479.4" y="46.7"/><use href="#c" x="1510.6" y="46.7"/><use href="#c" x="1541.8" y="46.7"/><use href="#c" x="1573" y="46.7"/>
<use href="#c" x="1764" y="46.7"/><use href="#c" x="1764" y="68.3"/><use href="#c" x="1835.7" y="156.7"/><use href="#c" x="1807.3" y="156.7"/>
</g>
</svg>
</body></html>
